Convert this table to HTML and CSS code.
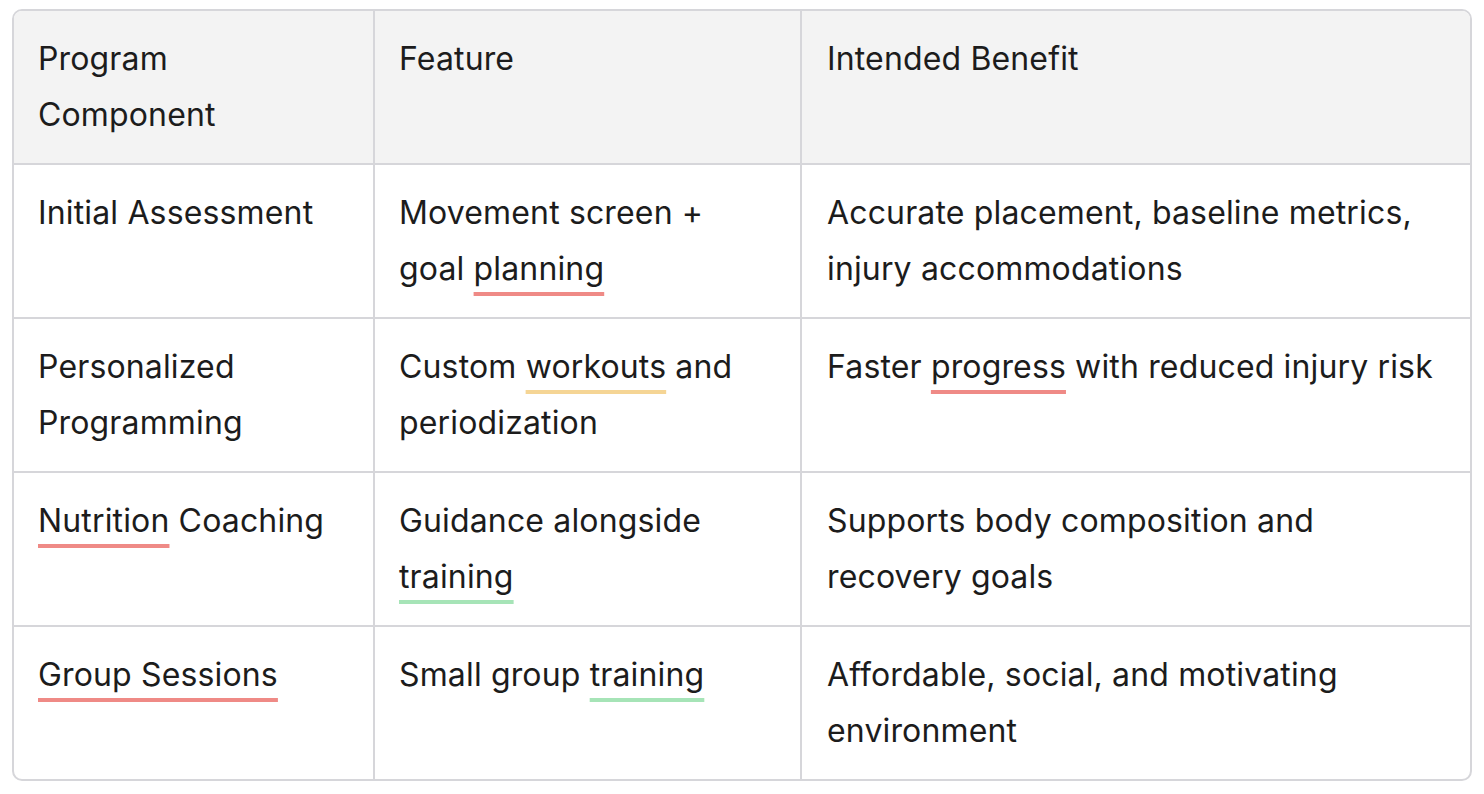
FILE: index.html
```html
<!DOCTYPE html>
<html lang="en">
<head>
<meta charset="utf-8">
<title>Program Components</title>
<link rel="stylesheet" href="styles.css">
</head>
<body>
<div class="wrap">
  <table class="grid">
    <colgroup>
      <col class="c1">
      <col class="c2">
      <col class="c3">
    </colgroup>
    <thead>
      <tr>
        <th>Program<br>Component</th>
        <th>Feature</th>
        <th class="benefit">Intended Benefit</th>
      </tr>
    </thead>
    <tbody>
      <tr>
        <td>Initial Assessment</td>
        <td>Movement screen +<br>goal <span class="u red">planning</span></td>
        <td class="benefit">Accurate placement, baseline metrics,<br>injury accommodations</td>
      </tr>
      <tr>
        <td>Personalized<br>Programming</td>
        <td>Custom <span class="u yellow">workouts</span> and<br>periodization</td>
        <td class="benefit">Faster <span class="u red">progress</span> with reduced injury risk</td>
      </tr>
      <tr>
        <td><span class="u red">Nutrition</span> Coaching</td>
        <td>Guidance alongside<br><span class="u green">training</span></td>
        <td class="benefit">Supports body composition and<br>recovery goals</td>
      </tr>
      <tr>
        <td><span class="u red">Group Sessions</span></td>
        <td>Small group <span class="u green">training</span></td>
        <td class="benefit">Affordable, social, and motivating<br>environment</td>
      </tr>
    </tbody>
  </table>
</div>
</body>
</html>
```
FILE: styles.css
```css
html, body {
  margin: 0;
  padding: 0;
  background: #ffffff;
}
.wrap {
  padding: 9px 12px 0 12px;
}
.grid {
  width: 1460px;
  table-layout: fixed;
  border-collapse: separate;
  border-spacing: 0;
  border: 2px solid #d6d6da;
  border-radius: 10px;
  overflow: hidden;
  font-family: Inter, "Noto Sans", sans-serif;
  font-size: 32px;
  letter-spacing: 0.15px;
  line-height: 56px;
  color: #1c1c1c;
}
.c1 { width: 361px; }
.c2 { width: 427px; }
.c3 { width: auto; }
th, td {
  text-align: left;
  vertical-align: top;
  padding: 20px 20px 20px 24px;
  font-weight: 400;
  border-right: 2px solid #d6d6da;
  border-bottom: 2px solid #d6d6da;
}
th.benefit, td.benefit { padding-left: 25px; }
th:last-child, td:last-child { border-right: none; }
tbody tr:last-child td { border-bottom: none; }
thead th {
  background: #f3f3f3;
}
.u {
  text-decoration: underline;
  text-decoration-thickness: 4px;
  text-underline-offset: 12px;
  text-decoration-skip-ink: none;
}
.red { text-decoration-color: #ef8a86; }
.yellow { text-decoration-color: #f5d595; }
.green { text-decoration-color: #a6e4b7; }
```
